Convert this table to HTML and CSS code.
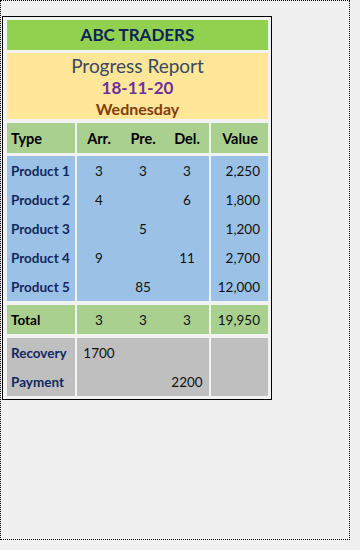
FILE: index.html
```html
<!DOCTYPE html>
<html>
<head>
<meta charset="utf-8">
<link rel="stylesheet" href="styles.css">
</head>
<body>
<div class="page">
  <div class="sheet">
    <div class="band title">ABC TRADERS</div>
    <div class="band report">
      <div class="r-title">Progress Report</div>
      <div class="r-date">18-11-20</div>
      <div class="r-day">Wednesday</div>
    </div>
    <div class="band grid head">
      <div class="cell c-type"><div class="row">Type</div></div>
      <div class="cell c-mid">
        <div class="row sub"><span>Arr.</span><span>Pre.</span><span>Del.</span></div>
      </div>
      <div class="cell c-val"><div class="row">Value</div></div>
    </div>
    <div class="band grid products">
      <div class="cell c-type">
        <div class="row">Product 1</div>
        <div class="row">Product 2</div>
        <div class="row">Product 3</div>
        <div class="row">Product 4</div>
        <div class="row">Product 5</div>
      </div>
      <div class="cell c-mid">
        <div class="row sub"><span>3</span><span>3</span><span>3</span></div>
        <div class="row sub"><span>4</span><span></span><span>6</span></div>
        <div class="row sub"><span></span><span>5</span><span></span></div>
        <div class="row sub"><span>9</span><span></span><span>11</span></div>
        <div class="row sub"><span></span><span>85</span><span></span></div>
      </div>
      <div class="cell c-val">
        <div class="row">2,250</div>
        <div class="row">1,800</div>
        <div class="row">1,200</div>
        <div class="row">2,700</div>
        <div class="row">12,000</div>
      </div>
    </div>
    <div class="band grid total">
      <div class="cell c-type"><div class="row">Total</div></div>
      <div class="cell c-mid">
        <div class="row sub"><span>3</span><span>3</span><span>3</span></div>
      </div>
      <div class="cell c-val"><div class="row">19,950</div></div>
    </div>
    <div class="band grid misc">
      <div class="cell c-type">
        <div class="row">Recovery</div>
        <div class="row">Payment</div>
      </div>
      <div class="cell c-mid">
        <div class="row sub"><span>1700</span><span></span><span></span></div>
        <div class="row sub"><span></span><span></span><span>2200</span></div>
      </div>
      <div class="cell c-val">
        <div class="row"></div>
        <div class="row"></div>
      </div>
    </div>
  </div>
</div>
</body>
</html>
```

FILE: styles.css
```css
html, body {
  margin: 0;
  padding: 0;
  background: #f0f0f0;
}
body {
  font-family: Lato, "Open Sans", sans-serif;
  width: 360px;
  height: 550px;
}
.page {
  box-sizing: border-box;
  width: 350px;
  height: 540px;
  border: 1px dotted #000;
  padding: 15px 0 0 1px;
}
.sheet {
  box-sizing: border-box;
  width: 270px;
  border: 1px solid #000;
  padding: 3px 3px 3px 4px;
  background: #f2f2f2;
  display: flex;
  flex-direction: column;
}
.title {
  background: #92d050;
  height: 30px;
  line-height: 30px;
  text-align: center;
  font-weight: 700;
  font-size: 17px;
  color: #0e2358;
}
.report {
  margin-top: 3px;
  background: #ffe699;
  height: 66px;
  text-align: center;
  padding-top: 1px;
  box-sizing: border-box;
}
.r-title {
  font-size: 19px;
  line-height: 24px;
  color: #3a4a60;
}
.r-date {
  font-size: 17px;
  font-weight: 700;
  line-height: 20px;
  color: #7030a0;
}
.r-day {
  font-size: 16px;
  font-weight: 700;
  line-height: 21px;
  color: #843c0c;
}
.grid {
  display: grid;
  grid-template-columns: 68px 132px 57px;
  column-gap: 2px;
}
.head { margin-top: 4px; }
.products { margin-top: 3px; }
.total { margin-top: 4px; }
.misc { margin-top: 4px; }
.row {
  height: 29px;
  line-height: 30px;
  font-size: 13.5px;
  white-space: nowrap;
}
.head .row {
  height: 30px;
  line-height: 31px;
  font-weight: 700;
  font-size: 14.5px;
  color: #000;
}
.c-type .row {
  padding-left: 4px;
  font-weight: 700;
  color: #13275e;
}
.head .c-type .row,
.total .c-type .row {
  color: #000;
}
.c-val .row {
  text-align: right;
  padding-right: 8px;
  color: #111;
}
.sub {
  display: grid;
  grid-template-columns: 44px 44px 44px;
  text-align: center;
  color: #111;
}
.head .sub, .head .c-val .row { color: #000; }
.head .c-val .row { text-align: right; padding-right: 10px; }
.head .cell, .total .cell { background: #a9d08e; }
.products .cell { background: #9bc2e6; }
.misc .cell { background: #bfbfbf; }
```
